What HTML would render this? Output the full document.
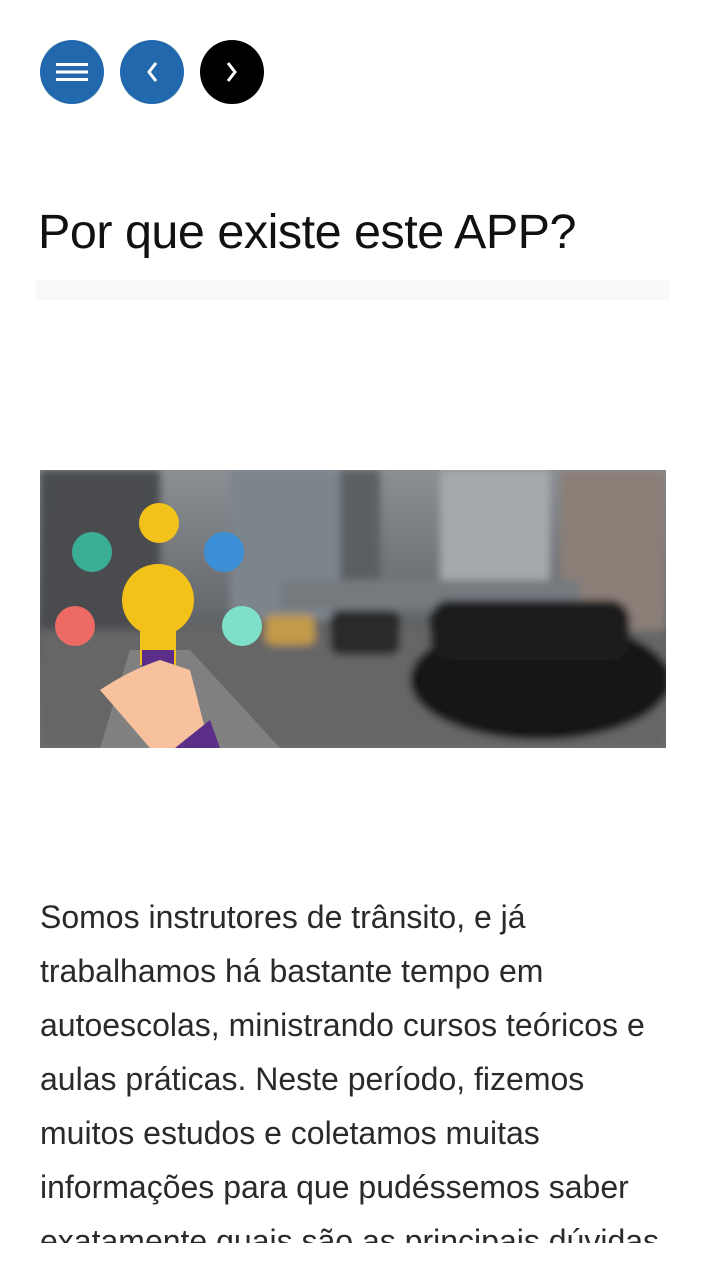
<!DOCTYPE html>
<html><head><meta charset="utf-8"><style>
body{margin:0;width:720px;height:1280px;background:#fff;overflow:hidden;font-family:"Liberation Sans",sans-serif;position:relative}
.b{position:absolute;top:40px;width:64px;height:64px;border-radius:50%}
h1{position:absolute;left:38px;top:200px;margin:0;font-weight:normal;font-size:48.5px;color:#111;letter-spacing:-0.5px;line-height:64px}
.bar{position:absolute;left:36px;top:280px;width:634px;height:20px;background:#f9f9f9}
.img{position:absolute;left:40px;top:470px;width:626px;height:278px;overflow:hidden;background:linear-gradient(#8a8f94,#6a6e72 45%,#5d5f61 60%,#707274)}
.t{position:absolute;left:40px;top:890px;width:680px;height:353px;overflow:hidden;font-size:32px;line-height:54px;color:#2a2a2a;white-space:nowrap}
</style></head><body>
<div class="b" style="left:40px;background:#2168ac"><svg width="64" height="64"><rect x="16" y="23" width="32" height="3" fill="#fff"/><rect x="16" y="30.5" width="32" height="3" fill="#fff"/><rect x="16" y="38" width="32" height="3" fill="#fff"/></svg></div>
<div class="b" style="left:120px;background:#2168ac"><svg width="64" height="64"><path d="M36 23 L29 32 L36 41" stroke="#fff" stroke-width="3" fill="none"/></svg></div>
<div class="b" style="left:200px;background:#000"><svg width="64" height="64"><path d="M28 23 L35 32 L28 41" stroke="#fff" stroke-width="3" fill="none"/></svg></div>
<h1>Por que existe este APP?</h1>
<div class="bar"></div>
<div class="img"><svg width="626" height="278">
<defs><filter id="bl"><feGaussianBlur stdDeviation="4"/></filter></defs>
<g filter="url(#bl)">
<rect x="0" y="0" width="120" height="180" fill="#4a4c50"/>
<rect x="190" y="0" width="110" height="150" fill="#7d858c"/>
<rect x="300" y="0" width="40" height="110" fill="#5a5f64"/>
<rect x="400" y="0" width="110" height="120" fill="#a6a9ab"/>
<rect x="520" y="0" width="106" height="170" fill="#8b7f78"/>
<rect x="0" y="160" width="626" height="118" fill="#666"/>
<rect x="240" y="110" width="300" height="30" fill="#757a7f"/>
<ellipse cx="500" cy="210" rx="130" ry="60" fill="#141416"/>
<rect x="390" y="130" width="200" height="60" rx="20" fill="#1b1c1e"/>
<rect x="290" y="140" width="70" height="45" rx="10" fill="#2a2a2c"/>
<rect x="225" y="145" width="50" height="30" rx="8" fill="#c29a4a"/>
</g>
<path d="M60 278 L90 180 L150 180 L240 278Z" fill="#9a9a9a" opacity=".5"/>
<circle cx="119" cy="53" r="20" fill="#f2c21a"/>
<circle cx="52" cy="82" r="20" fill="#3aaf96"/>
<circle cx="184" cy="82" r="20" fill="#3c8fd6"/>
<circle cx="35" cy="156" r="20" fill="#ee6a64"/>
<circle cx="202" cy="156" r="20" fill="#7ee0c8"/>
<circle cx="118" cy="130" r="36" fill="#f2c21a"/>
<rect x="100" y="160" width="36" height="35" fill="#f2c21a"/>
<rect x="102" y="180" width="32" height="20" fill="#5b2e8a"/>
<path d="M60 220 Q90 200 120 190 L150 200 L170 278 L110 278 Z" fill="#f7c19d"/>
<path d="M170 250 L180 278 L135 278 Z" fill="#5b2e8a"/>
</svg></div>
<div class="t">Somos instrutores de trânsito, e já<br>trabalhamos há bastante tempo em<br>autoescolas, ministrando cursos teóricos e<br>aulas práticas. Neste período, fizemos<br>muitos estudos e coletamos muitas<br>informações para que pudéssemos saber<br>exatamente quais são as principais dúvidas</div>
</body></html>
